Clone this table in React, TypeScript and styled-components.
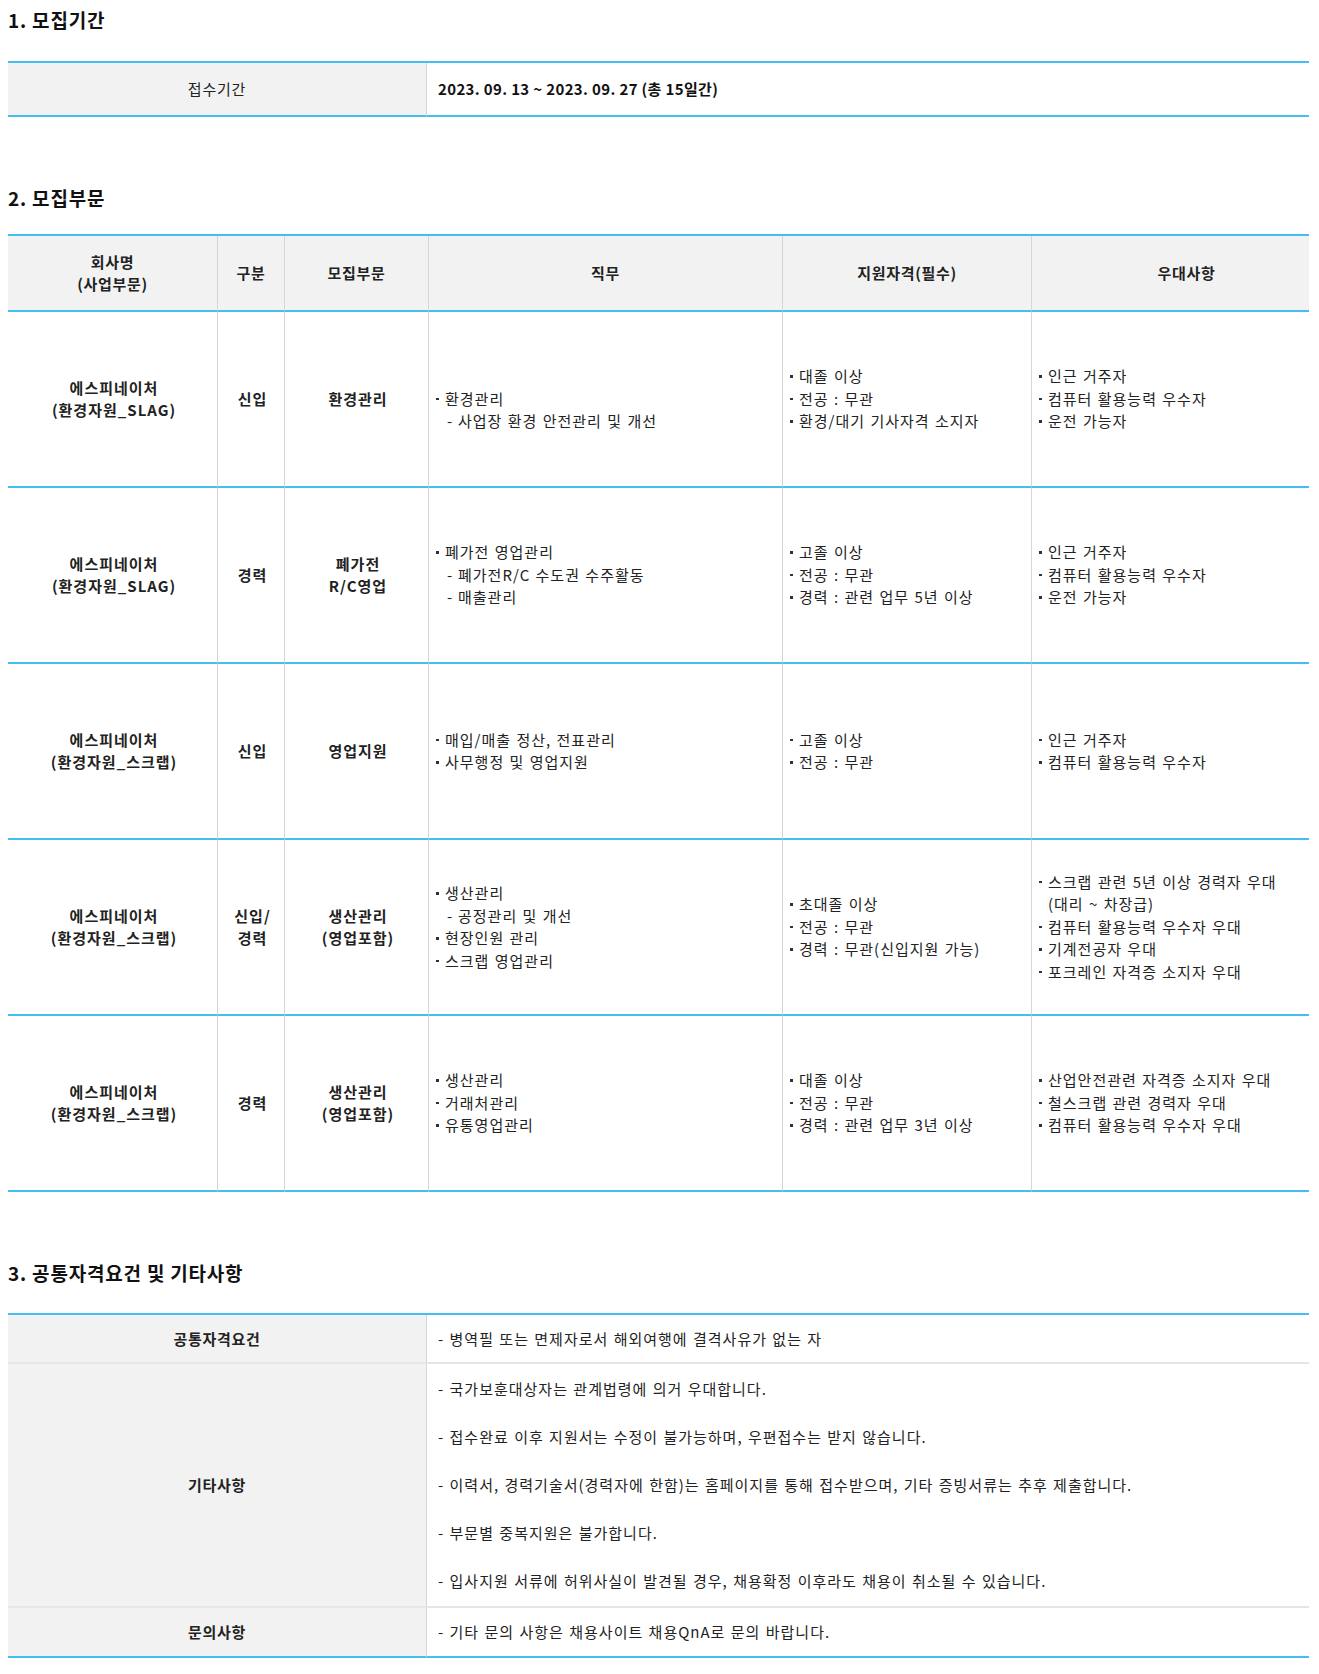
import React from 'react';
import styled, { createGlobalStyle } from 'styled-components';

const BLUE = '#45bff0';
const LINE = '#d6d6d6';
const HEAD_BG = '#f2f2f2';

const GlobalStyle = createGlobalStyle`
  body {
    margin: 8px;
    background: #fff;
    font-family: "Noto Sans CJK KR", "Noto Sans", sans-serif;
    color: #222;
  }
`

const Page = styled.div`
  width: 1301px;
`

const Heading = styled.h3<{ $mb: number; $mt?: number }>`
  margin: ${p => p.$mt ?? 0}px 0 ${p => p.$mb}px;
  font-size: 19px;
  line-height: 24px;
  font-weight: 700;
  letter-spacing: 0.8px;
  color: #111;
`

const Table = styled.table`
  width: 100%;
  table-layout: fixed;
  border-collapse: separate;
  border-spacing: 0;
  border-top: 2px solid ${BLUE};
  font-size: 15px;
  letter-spacing: 1px;
  word-spacing: 1px;
`

const Col = styled.col<{ $w: number }>`
  width: ${p => p.$w}px;
`

/* 1. 모집기간 / 3. 공통자격요건 */
const LabelCell = styled.th<{ $h: number; $last?: boolean; $bold?: boolean }>`
  height: ${p => p.$h}px;
  padding: 0 10px;
  background: ${HEAD_BG};
  border-right: 1px solid ${LINE};
  border-bottom: 2px solid ${p => (p.$last ? BLUE : '#e6e6e6')};
  font-weight: ${p => (p.$bold ? 700 : 400)};
  letter-spacing: ${p => (p.$bold ? 0.7 : 0.8)}px;
  color: #222;
  line-height: 24px;
  text-align: center;
  vertical-align: middle;
`

const ValueCell = styled.td<{ $last?: boolean; $bold?: boolean }>`
  padding: 0 10px 0 11px;
  border-bottom: 2px solid ${p => (p.$last ? BLUE : '#e6e6e6')};
  font-weight: ${p => (p.$bold ? 700 : 400)};
  letter-spacing: ${p => (p.$bold ? 0.35 : 1)}px;
  word-spacing: ${p => (p.$bold ? 0 : 1)}px;
  color: ${p => (p.$bold ? '#111' : '#222')};
  line-height: 24px;
  vertical-align: middle;
  white-space: nowrap;
`

const Para = styled.p<{ $gap?: boolean }>`
  margin: 0 0 ${p => (p.$gap ? 24 : 0)}px;
`

/* 2. 모집부문 */
const HeadCell = styled.th<{ $first?: boolean; $pl?: number }>`
  height: 74px;
  padding: 0 6px 0 ${p => p.$pl ?? 6}px;
  background: ${HEAD_BG};
  border-left: ${p => (p.$first ? 'none' : `1px solid ${LINE}`)};
  border-bottom: 2px solid ${BLUE};
  font-weight: 700;
  letter-spacing: 0.7px;
  color: #222;
  line-height: 22.5px;
  text-align: center;
  vertical-align: middle;
`

const Cell = styled.td<{ $first?: boolean; $center?: boolean; $bold?: boolean }>`
  height: 174px;
  padding: 0 4px 0 7px;
  border-left: ${p => (p.$first ? 'none' : `1px solid ${LINE}`)};
  border-bottom: 2px solid ${BLUE};
  font-weight: ${p => (p.$bold ? 700 : 400)};
  color: #222;
  line-height: 22.5px;
  text-align: ${p => (p.$center ? 'center' : 'left')};
  vertical-align: middle;
`

const Item = styled.div`
  white-space: nowrap;
`

const Mark = styled.span<{ $w: number; $pl?: number }>`
  display: inline-block;
  width: ${p => p.$w}px;
  padding-left: ${p => p.$pl ?? 0}px;
  box-sizing: border-box;
  letter-spacing: 0;
`

const Dot = styled.span`
  display: inline-block;
  width: 2.5px;
  height: 2.5px;
  background: #333;
  vertical-align: middle;
  margin-bottom: 3px;
`

type Row = {
  company: string[];
  kind: string[];
  dept: string[];
  job: string[];
  req: string[];
  pref: string[];
};

const rows: Row[] = [
  {
    company: ['에스피네이처', '(환경자원_SLAG)'],
    kind: ['신입'],
    dept: ['환경관리'],
    job: ['', '•환경관리', '-사업장 환경 안전관리 및 개선'],
    req: ['•대졸 이상', '•전공 : 무관', '•환경/대기 기사자격 소지자'],
    pref: ['•인근 거주자', '•컴퓨터 활용능력 우수자', '•운전 가능자'],
  },
  {
    company: ['에스피네이처', '(환경자원_SLAG)'],
    kind: ['경력'],
    dept: ['폐가전', 'R/C영업'],
    job: ['•폐가전 영업관리', '-폐가전R/C 수도권 수주활동', '-매출관리'],
    req: ['•고졸 이상', '•전공 : 무관', '•경력 : 관련 업무 5년 이상'],
    pref: ['•인근 거주자', '•컴퓨터 활용능력 우수자', '•운전 가능자'],
  },
  {
    company: ['에스피네이처', '(환경자원_스크랩)'],
    kind: ['신입'],
    dept: ['영업지원'],
    job: ['•매입/매출 정산, 전표관리', '•사무행정 및 영업지원'],
    req: ['•고졸 이상', '•전공 : 무관'],
    pref: ['•인근 거주자', '•컴퓨터 활용능력 우수자'],
  },
  {
    company: ['에스피네이처', '(환경자원_스크랩)'],
    kind: ['신입/', '경력'],
    dept: ['생산관리', '(영업포함)'],
    job: ['•생산관리', '-공정관리 및 개선', '•현장인원 관리', '•스크랩 영업관리'],
    req: ['•초대졸 이상', '•전공 : 무관', '•경력 : 무관(신입지원 가능)'],
    pref: [
      '•스크랩 관련 5년 이상 경력자 우대',
      '>(대리 ~ 차장급)',
      '•컴퓨터 활용능력 우수자 우대',
      '•기계전공자 우대',
      '•포크레인 자격증 소지자 우대',
    ],
  },
  {
    company: ['에스피네이처', '(환경자원_스크랩)'],
    kind: ['경력'],
    dept: ['생산관리', '(영업포함)'],
    job: ['•생산관리', '•거래처관리', '•유통영업관리'],
    req: ['•대졸 이상', '•전공 : 무관', '•경력 : 관련 업무 3년 이상'],
    pref: ['•산업안전관련 자격증 소지자 우대', '•철스크랩 관련 경력자 우대', '•컴퓨터 활용능력 우수자 우대'],
  },
];

// first char of a line: • bullet, - sub item, > continuation, '' = empty line
function Lines({ items }: { items: string[] }) {
  return (
    <>
      {items.map((line, i) => {
        if (line === '') return <Item key={i}>&nbsp;</Item>;
        const m = line[0];
        const text = line.slice(1);
        if (m === '•')
          return (
            <Item key={i}>
              <Mark $w={9}><Dot /></Mark>
              {text}
            </Item>
          );
        if (m === '-')
          return (
            <Item key={i}>
              <Mark $w={22} $pl={11}>-</Mark>
              {text}
            </Item>
          );
        return (
          <Item key={i}>
            <Mark $w={9} />
            {text}
          </Item>
        );
      })}
    </>
  );
}

function Plain({ items }: { items: string[] }) {
  return (
    <>
      {items.map((t, i) => (
        <div key={i}>{t}</div>
      ))}
    </>
  );
}

const notes = [
  '- 국가보훈대상자는 관계법령에 의거 우대합니다.',
  '- 접수완료 이후 지원서는 수정이 불가능하며, 우편접수는 받지 않습니다.',
  '- 이력서, 경력기술서(경력자에 한함)는 홈페이지를 통해 접수받으며, 기타 증빙서류는 추후 제출합니다.',
  '- 부문별 중복지원은 불가합니다.',
  '- 입사지원 서류에 허위사실이 발견될 경우, 채용확정 이후라도 채용이 취소될 수 있습니다.',
];

export default function App() {
  return (
    <Page>
      <GlobalStyle />

      <Heading $mb={29}>1. 모집기간</Heading>
      <Table>
        <colgroup>
          <Col $w={419} />
          <Col $w={882} />
        </colgroup>
        <tbody>
          <tr>
            <LabelCell $h={52} $last>접수기간</LabelCell>
            <ValueCell $last $bold>2023. 09. 13 ~ 2023. 09. 27 (총 15일간)</ValueCell>
          </tr>
        </tbody>
      </Table>

      <Heading $mt={69} $mb={24}>2. 모집부문</Heading>
      <Table>
        <colgroup>
          <Col $w={209} />
          <Col $w={67} />
          <Col $w={144} />
          <Col $w={354} />
          <Col $w={249} />
          <Col $w={278} />
        </colgroup>
        <thead>
          <tr>
            <HeadCell $first>회사명<br />(사업부문)</HeadCell>
            <HeadCell>구분</HeadCell>
            <HeadCell>모집부문</HeadCell>
            <HeadCell>직무</HeadCell>
            <HeadCell>지원자격(필수)</HeadCell>
            <HeadCell $pl={38}>우대사항</HeadCell>
          </tr>
        </thead>
        <tbody>
          {rows.map((r, i) => (
            <tr key={i}>
              <Cell $first $center $bold><Plain items={r.company} /></Cell>
              <Cell $center $bold><Plain items={r.kind} /></Cell>
              <Cell $center $bold><Plain items={r.dept} /></Cell>
              <Cell><Lines items={r.job} /></Cell>
              <Cell><Lines items={r.req} /></Cell>
              <Cell><Lines items={r.pref} /></Cell>
            </tr>
          ))}
        </tbody>
      </Table>

      <Heading $mt={69} $mb={28}>3. 공통자격요건 및 기타사항</Heading>
      <Table>
        <colgroup>
          <Col $w={419} />
          <Col $w={882} />
        </colgroup>
        <tbody>
          <tr>
            <LabelCell $h={47} $bold>공통자격요건</LabelCell>
            <ValueCell>- 병역필 또는 면제자로서 해외여행에 결격사유가 없는 자</ValueCell>
          </tr>
          <tr>
            <LabelCell $h={242} $bold>기타사항</LabelCell>
            <ValueCell>
              {notes.map((n, i) => (
                <Para key={i} $gap={i < notes.length - 1}>{n}</Para>
              ))}
            </ValueCell>
          </tr>
          <tr>
            <LabelCell $h={48} $last $bold>문의사항</LabelCell>
            <ValueCell $last>- 기타 문의 사항은 채용사이트 채용QnA로 문의 바랍니다.</ValueCell>
          </tr>
        </tbody>
      </Table>
    </Page>
  );
}
